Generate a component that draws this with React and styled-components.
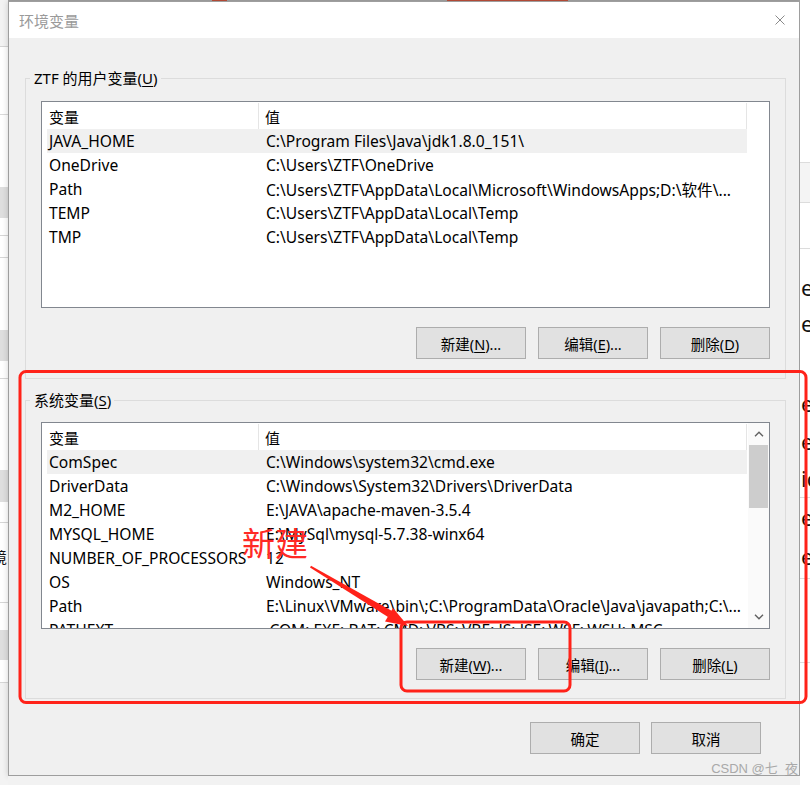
import React from 'react'
import styled, { createGlobalStyle } from 'styled-components'

const FONT = `"Noto Sans", "Noto Sans CJK SC", sans-serif`

const GlobalStyle = createGlobalStyle`
  html, body {
    margin: 0;
    padding: 0;
  }
  body {
    background: #ffffff;
    font-family: ${FONT};
  }
`

const userVars = [
  ['JAVA_HOME', 'C:\\Program Files\\Java\\jdk1.8.0_151\\'],
  ['OneDrive', 'C:\\Users\\ZTF\\OneDrive'],
  ['Path', 'C:\\Users\\ZTF\\AppData\\Local\\Microsoft\\WindowsApps;D:\\软件\\...'],
  ['TEMP', 'C:\\Users\\ZTF\\AppData\\Local\\Temp'],
  ['TMP', 'C:\\Users\\ZTF\\AppData\\Local\\Temp'],
]

const systemVars = [
  ['ComSpec', 'C:\\Windows\\system32\\cmd.exe'],
  ['DriverData', 'C:\\Windows\\System32\\Drivers\\DriverData'],
  ['M2_HOME', 'E:\\JAVA\\apache-maven-3.5.4'],
  ['MYSQL_HOME', 'E:\\MySql\\mysql-5.7.38-winx64'],
  ['NUMBER_OF_PROCESSORS', '12'],
  ['OS', 'Windows_NT'],
  ['Path', 'E:\\Linux\\VMware\\bin\\;C:\\ProgramData\\Oracle\\Java\\javapath;C:\\...'],
  ['PATHEXT', '.COM;.EXE;.BAT;.CMD;.VBS;.VBE;.JS;.JSE;.WSF;.WSH;.MSC'],
]

const Page = styled.div`
  position: relative;
  width: 810px;
  height: 785px;
  overflow: hidden;
  display: flex;
  background: #ffffff;
`

// bits of the window behind the dialog
const LeftStrip = styled.div`
  width: 8px;
  flex: none;
  overflow: hidden;
  display: flex;
  flex-direction: column;
  background: linear-gradient(
    to bottom,
    #f3f3f3 0 46px, #d4d4d4 46px 47px, #ffffff 47px 114px, #dadada 114px 115px,
    #ffffff 115px 187px, #dedede 187px 218px, #ffffff 218px 235px, #d6d6d6 235px 236px,
    #ffffff 236px 257px, #d6d6d6 257px 258px, #ffffff 258px 330px, #dedede 330px 361px,
    #ffffff 361px 378px, #d6d6d6 378px 379px, #ffffff 379px 470px, #dedede 470px 502px,
    #ffffff 502px 522px, #d6d6d6 522px 523px, #ffffff 523px 602px, #d6d6d6 602px 603px,
    #ffffff 603px 630px, #dedede 630px 660px, #ffffff 660px 682px, #d6d6d6 682px 683px,
    #f3f3f3 683px
  );
`

const StripGlyph = styled.span`
  margin-top: ${(p) => p.$top}px;
  margin-left: ${(p) => p.$left || 0}px;
  font-family: ${FONT};
  font-size: ${(p) => p.$size || 15}px;
  line-height: 22px;
  color: #111;
  white-space: nowrap;
`

const RightStrip = styled.div`
  width: 10px;
  flex: none;
  overflow: hidden;
  display: flex;
  flex-direction: column;
  background: linear-gradient(
    to bottom,
    #ffffff 0 162px, #dcdcdc 162px 163px, #f4f4f4 163px 202px, #dcdcdc 202px 203px,
    #ffffff 203px 248px, #dcdcdc 248px 249px, #ffffff 249px 497px, #dcdcdc 497px 498px,
    #ffffff 498px 578px, #dcdcdc 578px 579px, #ffffff 579px 662px, #dcdcdc 662px 663px,
    #ffffff 663px
  );
`

const Center = styled.div`
  width: 792px;
  flex: none;
  display: flex;
  flex-direction: column;
`

const TopEdge = styled.div`
  height: 1px;
  flex: none;
  background: linear-gradient(
    to right,
    #a6a6a6 0 204px, #c0503a 204px 219px, #a6a6a6 219px 439px, #c0503a 439px 560px, #a6a6a6 560px
  );
`

const BottomEdge = styled.div`
  flex: 1;
  background: #f2f2f2;
`

const Dialog = styled.div`
  height: 775px;
  flex: none;
  box-sizing: border-box;
  border: 1px solid #9e9e9e;
  background: #f0f0f0;
  display: flex;
  flex-direction: column;
  box-shadow: 0 0 6px rgba(0, 0, 0, 0.18);
`

const TitleBar = styled.div`
  height: 36px;
  flex: none;
  background: #ffffff;
  display: flex;
  align-items: center;
  justify-content: space-between;
  padding: 0 14px 0 10px;
`

const Title = styled.span`
  font-family: ${FONT};
  font-size: 15px;
  color: #9a9a9a;
`

const CloseButton = styled.span`
  display: flex;
  width: 10px;
  height: 10px;
`

const Body = styled.div`
  flex: 1;
  display: flex;
  flex-direction: column;
  padding: 30px 13px 0 16px;
`

const Group = styled.fieldset`
  margin: 0;
  padding: 0;
  border: 1px solid #dcdcdc;
  min-width: 0;
  & + & {
    margin-top: 11px;
  }
`

const Legend = styled.legend`
  margin-left: 4px;
  padding: 0 3px 0 4px;
  font-family: ${FONT};
  font-size: 15px;
  line-height: 20px;
  color: #000;
`

const GroupInner = styled.div`
  display: flex;
  flex-direction: column;
  padding: ${(p) => p.$top}px 15px ${(p) => p.$bottom}px 15px;
`

const ListBox = styled.div`
  height: 207px;
  box-sizing: border-box;
  border: 1px solid #82878f;
  background: #ffffff;
  display: flex;
  overflow: hidden;
`

const ListContent = styled.div`
  flex: 1;
  min-width: 0;
  display: flex;
  flex-direction: column;
`

const HeaderRow = styled.div`
  height: 27px;
  flex: none;
  display: grid;
  grid-template-columns: 217px 1fr;
`

const HeaderCell = styled.div`
  margin-top: 1px;
  border-right: 1px solid #e5e5e5;
  padding-left: ${(p) => p.$pad}px;
  display: flex;
  align-items: center;
  font-family: ${FONT};
  font-size: 15px;
  color: #000;
`

const Row = styled.div`
  height: 24px;
  flex: none;
  margin-left: 5px;
  display: grid;
  grid-template-columns: 212px 1fr;
  align-items: center;
  background: ${(p) => (p.$selected ? '#f0f0f0' : 'transparent')};
`

const Cell = styled.span`
  padding-left: ${(p) => p.$pad}px;
  font-family: ${FONT};
  font-size: 15.6px;
  color: #000;
  white-space: nowrap;
  overflow: hidden;
`

const Gutter = styled.div`
  width: 22px;
  flex: none;
`

const ScrollBar = styled.div`
  width: 21px;
  flex: none;
  margin-left: 1px;
  display: flex;
  flex-direction: column;
  background: #fafafa;
`

const ScrollArrow = styled.div`
  height: 22px;
  flex: none;
  display: flex;
  align-items: center;
  justify-content: center;
`

const ScrollThumb = styled.div`
  height: 63px;
  flex: none;
  margin: 0 1px;
  background: #cdcdcd;
`

const ScrollTrack = styled.div`
  flex: 1;
`

const ButtonRow = styled.div`
  display: flex;
  justify-content: flex-end;
  gap: ${(p) => p.$gap || 12}px;
  margin-top: ${(p) => p.$top}px;
  padding-right: ${(p) => p.$right || 0}px;
`

const Button = styled.button`
  width: 110px;
  height: 32px;
  box-sizing: border-box;
  border: 1px solid #adadad;
  background: #e1e1e1;
  padding: 0;
  font-family: ${FONT};
  font-size: 14.5px;
  color: #000;
`

const Mnemonic = styled.span`
  text-decoration: underline;
  text-underline-offset: 2px;
`

const Overlay = styled.svg`
  position: absolute;
  left: 0;
  top: 0;
  pointer-events: none;
`

const NoteText = styled.span`
  position: absolute;
  left: 242px;
  top: 524px;
  font-family: "Noto Sans CJK SC", sans-serif;
  font-size: 33px;
  line-height: 36px;
  color: #ff2a26;
`

const Watermark = styled.span`
  position: absolute;
  right: 12px;
  top: 761px;
  font-family: "Liberation Sans", "Noto Sans CJK SC", sans-serif;
  font-size: 13px;
  line-height: 16px;
  color: #a9a9a9;
`

const Chevron = ({ up }) => (
  <svg width="10" height="6" viewBox="0 0 10 6">
    <path
      d={up ? 'M1 5.2 L5 1.2 L9 5.2' : 'M1 0.8 L5 4.8 L9 0.8'}
      fill="none"
      stroke="#606060"
      strokeWidth="1.4"
    />
  </svg>
)

const VarList = ({ rows, scroll }) => (
  <ListBox>
    <ListContent>
      <HeaderRow>
        <HeaderCell $pad={7}>变量</HeaderCell>
        <HeaderCell $pad={6}>值</HeaderCell>
      </HeaderRow>
      {rows.map(([name, value], i) => (
        <Row key={name + i} $selected={i === 0}>
          <Cell $pad={2}>{name}</Cell>
          <Cell $pad={7}>{value}</Cell>
        </Row>
      ))}
    </ListContent>
    {scroll ? (
      <ScrollBar>
        <ScrollArrow>
          <Chevron up />
        </ScrollArrow>
        <ScrollThumb />
        <ScrollTrack />
        <ScrollArrow>
          <Chevron />
        </ScrollArrow>
      </ScrollBar>
    ) : (
      <Gutter />
    )}
  </ListBox>
)

const Label = ({ text, k, dots }) => (
  <>
    {text}(<Mnemonic>{k}</Mnemonic>){dots ? '...' : ''}
  </>
)

const App = () => {
  return (
    <Page>
      <GlobalStyle />
      <LeftStrip>
        <StripGlyph $top={546} $left={-8}>
          境
        </StripGlyph>
      </LeftStrip>
      <Center>
        <TopEdge />
        <Dialog>
          <TitleBar>
            <Title>环境变量</Title>
            <CloseButton>
              <svg width="10" height="10" viewBox="0 0 10 10">
                <path d="M0.5 0.5 L9.5 9.5 M9.5 0.5 L0.5 9.5" stroke="#8a8a8a" strokeWidth="1" />
              </svg>
            </CloseButton>
          </TitleBar>
          <Body>
            <Group>
              <Legend>
                ZTF 的用户变量(<Mnemonic>U</Mnemonic>)
              </Legend>
              <GroupInner $top={13} $bottom={19}>
                <VarList rows={userVars} />
                <ButtonRow $top={19}>
                  <Button>
                    <Label text="新建" k="N" dots />
                  </Button>
                  <Button>
                    <Label text="编辑" k="E" dots />
                  </Button>
                  <Button>
                    <Label text="删除" k="D" />
                  </Button>
                </ButtonRow>
              </GroupInner>
            </Group>
            <Group>
              <Legend>
                系统变量(<Mnemonic>S</Mnemonic>)
              </Legend>
              <GroupInner $top={12} $bottom={18}>
                <VarList rows={systemVars} scroll />
                <ButtonRow $top={19}>
                  <Button>
                    <Label text="新建" k="W" dots />
                  </Button>
                  <Button>
                    <Label text="编辑" k="I" dots />
                  </Button>
                  <Button>
                    <Label text="删除" k="L" />
                  </Button>
                </ButtonRow>
              </GroupInner>
            </Group>
            <ButtonRow $top={23} $gap={11} $right={25}>
              <Button>确定</Button>
              <Button>取消</Button>
            </ButtonRow>
          </Body>
        </Dialog>
        <BottomEdge />
      </Center>
      <RightStrip>
        <StripGlyph $top={276} $left={1} $size={22}>e</StripGlyph>
        <StripGlyph $top={14} $left={1} $size={22}>e</StripGlyph>
        <StripGlyph $top={58} $left={1} $size={22}>e</StripGlyph>
        <StripGlyph $top={16} $left={1} $size={22}>e</StripGlyph>
        <StripGlyph $top={15} $left={1} $size={22}>ic</StripGlyph>
        <StripGlyph $top={17} $left={1} $size={22}>e</StripGlyph>
        <StripGlyph $top={17} $left={1} $size={22}>e</StripGlyph>
      </RightStrip>

      <Overlay width="810" height="785" viewBox="0 0 810 785">
        <rect x="20" y="371.5" width="786" height="331" rx="6" fill="none" stroke="#ff2219" strokeWidth="3" />
        <rect x="401" y="622" width="169" height="69" rx="6" fill="none" stroke="#ff2219" strokeWidth="3" />
        <polygon points="310,567.5 311,565.8 392,611 388,617" fill="#ff2219" />
        <polygon points="408,626 385,621.5 393,608" fill="#ff2219" />
      </Overlay>
      <NoteText>新建</NoteText>
      <Watermark>CSDN @七_夜</Watermark>
    </Page>
  )
}

export default App
